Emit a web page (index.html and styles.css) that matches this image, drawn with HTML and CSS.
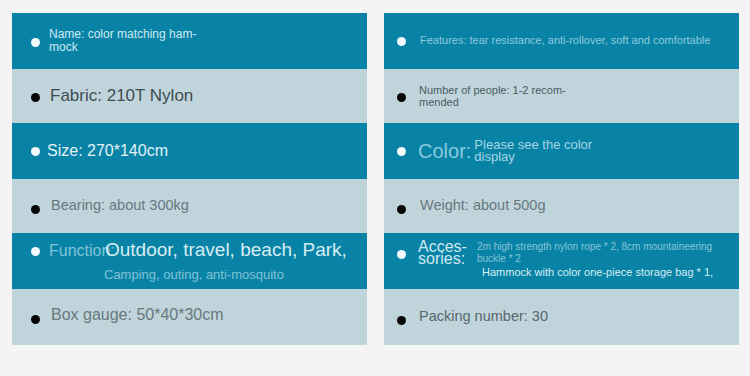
FILE: index.html
```html
<!DOCTYPE html>
<html lang="en">
<head>
<meta charset="utf-8">
<title>Hammock specs</title>
<link rel="stylesheet" href="styles.css">
</head>
<body>
<div class="page">
  <div class="panel left">
    <div class="row dark r1">
      <span class="dot"></span>
      <span class="t name">Name: color matching ham-<br>mock</span>
    </div>
    <div class="row light r2">
      <span class="dot"></span>
      <span class="t fabric">Fabric: 210T Nylon</span>
    </div>
    <div class="row dark r3">
      <span class="dot"></span>
      <span class="t size">Size: 270*140cm</span>
    </div>
    <div class="row light r4">
      <span class="dot"></span>
      <span class="t bearing">Bearing: about 300kg</span>
    </div>
    <div class="row dark r5 top">
      <span class="dot"></span>
      <div class="func">
        <div class="func-line">
          <span class="func-label">Function:</span>
          <span class="func-value">Outdoor, travel, beach, Park,</span>
        </div>
        <span class="func-sub">Camping, outing, anti-mosquito</span>
      </div>
    </div>
    <div class="row light r6">
      <span class="dot"></span>
      <span class="t box">Box gauge: 50*40*30cm</span>
    </div>
  </div>
  <div class="panel right">
    <div class="row dark r1">
      <span class="dot"></span>
      <span class="t features">Features: tear resistance, anti-rollover, soft and comfortable</span>
    </div>
    <div class="row light r2">
      <span class="dot"></span>
      <span class="t people">Number of people: 1-2 recom-<br>mended</span>
    </div>
    <div class="row dark r3">
      <span class="dot"></span>
      <span class="color-label">Color:</span>
      <span class="color-value">Please see the color<br>display</span>
    </div>
    <div class="row light r4">
      <span class="dot"></span>
      <span class="t weight">Weight: about 500g</span>
    </div>
    <div class="row dark r5 top">
      <span class="dot"></span>
      <div class="acc">
        <div class="acc-line">
          <span class="acc-label">Acces-<br>sories:</span>
          <span class="acc-value">2m high strength nylon rope * 2, 8cm mountaineering<br>buckle * 2</span>
        </div>
        <span class="acc-sub">Hammock with color one-piece storage bag * 1,</span>
      </div>
    </div>
    <div class="row light r6">
      <span class="dot"></span>
      <span class="t packing">Packing number: 30</span>
    </div>
  </div>
</div>
</body>
</html>
```

FILE: styles.css
```css
* { box-sizing: border-box; }
html, body { margin: 0; padding: 0; }
body {
  background: #f4f4f4;
  font-family: "Liberation Sans", Arial, sans-serif;
  width: 750px;
  height: 376px;
  overflow: hidden;
}
.page {
  display: grid;
  grid-template-columns: 355px 355px;
  column-gap: 17px;
  padding: 13px 0 0 12px;
}
.panel {
  display: flex;
  flex-direction: column;
}
.row {
  display: flex;
  align-items: center;
  white-space: nowrap;
}
.row.top { align-items: flex-start; }
.dark { background: #0983a5; }
.light { background: #c0d5db; }
.r1 { height: 56px; }
.r2 { height: 54px; }
.r3 { height: 56px; }
.r4 { height: 54px; }
.r5 { height: 56px; }
.r6 { height: 56px; }

.dot {
  flex: none;
  width: 9px;
  height: 9px;
  border-radius: 50%;
}
.dark .dot { background: #f4fbfd; }
.light .dot { background: #050505; }

.left .row { padding-left: 19px; }
.left .dot { margin-right: 9px; }
.right .row { padding-left: 13px; }
.right .dot { margin-right: 12px; }

.t { display: block; }

/* left column */
.left .r1 .dot { margin-top: 2px; }
.name { font-size: 12px; line-height: 13px; color: #cfe9f2; }
.left .r2 .dot { margin-top: 3px; }
.fabric { font-size: 17px; color: #3e4c53; margin-left: 1px; }
.left .r3 .dot { margin-top: 0; }
.size { font-size: 16px; color: #e3f2f7; margin-left: -2px; margin-top: 0; }
.left .r4 .dot { margin-top: 6px; }
.bearing { font-size: 14.5px; color: #66777e; margin-left: 2px; margin-top: -2px; }
.left .r5 { padding-top: 8px; }
.left .r5 .dot { margin-top: 6px; }
.func { display: flex; flex-direction: column; }
.func-line { display: flex; align-items: baseline; }
.func-label {
  display: block;
  width: 56px;
  font-size: 16px;
  color: #80c4da;
  overflow: visible;
}
.func-value { font-size: 19px; color: #d6edf4; line-height: 17px; position: relative; }
.func-sub { font-size: 13px; color: #80c2d7; margin-left: 55px; margin-top: 8px; line-height: 13px; }
.left .r6 .dot { margin-top: 4px; }
.box { font-size: 16px; color: #67787e; margin-left: 2px; margin-top: -4px; }

/* right column */
.right .r1 .dot { margin-top: 0; }
.features { font-size: 11px; color: #8ecadd; margin-left: 2px; margin-top: -2px; }
.right .r2 .dot { margin-top: 2px; }
.people { font-size: 11px; line-height: 12px; color: #4b5a61; margin-left: 1px; margin-top: -1px; }
.right .r3 .dot { margin-top: 0; }
.color-label { font-size: 20px; color: #8bcadf; margin-right: 3px; }
.color-value { font-size: 13px; line-height: 12px; color: #a6d6e6; margin-top: -1px; }
.right .r4 .dot { margin-top: 6px; }
.weight { font-size: 14.5px; color: #67787f; margin-left: 2px; margin-top: -2px; }
.right .r5 { padding-top: 9px; }
.right .r5 .dot { margin-top: 8px; }
.acc { display: flex; flex-direction: column; }
.acc-line { display: flex; align-items: flex-start; }
.acc-label { font-size: 16px; line-height: 12px; color: #d0eaf3; width: 59px; margin-top: -1px; }
.acc-value { font-size: 10px; line-height: 12px; color: #86c4d8; margin-top: -1px; }
.acc-sub { font-size: 11px; color: #d7eef5; margin-left: 64px; margin-top: 1px; }
.right .r6 .dot { margin-top: 6px; }
.packing { font-size: 14.5px; color: #57676d; margin-left: 1px; margin-top: -2px; }
```
